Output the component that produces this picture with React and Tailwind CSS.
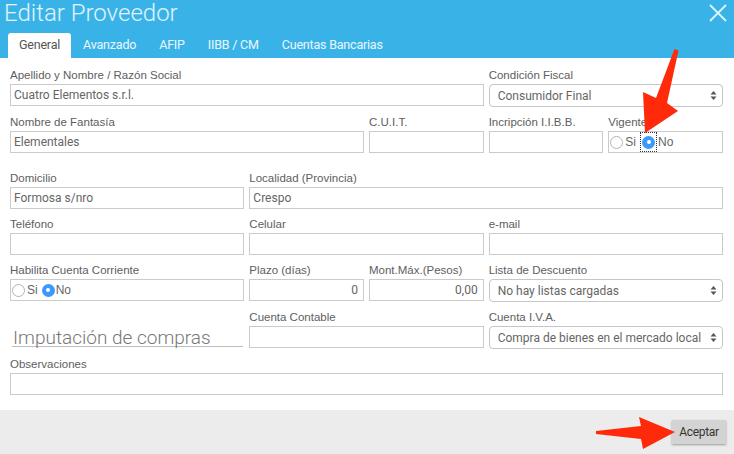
import React from 'react';

const SPAN = { 1: 'col-span-1', 2: 'col-span-2', 3: 'col-span-3', 4: 'col-span-4', 6: 'col-span-6' };

const labelCls =
  "block h-[16px] text-[11.5px] leading-[14px] text-[#5e5e5e] font-['Liberation_Sans',Arial,sans-serif] whitespace-nowrap";
const boxCls =
  "h-[22px] border border-[#cbcbcb] bg-white flex items-center px-[3px] text-[12px] text-[#666] font-['Roboto',sans-serif] whitespace-nowrap overflow-hidden";

function Field({ label, span = 1, children }) {
  return (
    <div className={SPAN[span]}>
      <div className={labelCls}>{label}</div>
      {children}
    </div>
  );
}

function Input({ value = '', right }) {
  return <div className={`${boxCls} ${right ? 'justify-end pr-[5px]' : ''}`}>{value}</div>;
}

function Select({ value }) {
  return (
    <div className="h-[23px] border border-[#c6c6c6] rounded-[4px] bg-white flex items-center pl-[8px] pr-[5px] text-[12px] text-[#666] font-['Roboto',sans-serif] whitespace-nowrap">
      <span className="flex-1 overflow-hidden">{value}</span>
      <svg width="7" height="11" viewBox="0 0 7 11" className="shrink-0">
        <path d="M3.5 1 L6.5 4.5 L0.5 4.5 Z" fill="#555" />
        <path d="M3.5 10 L6.5 6.5 L0.5 6.5 Z" fill="#555" />
      </svg>
    </div>
  );
}

function Radio({ checked, focus }) {
  const dot = checked ? (
    <span className="w-[13px] h-[13px] rounded-full bg-[#3b99fc] flex items-center justify-center">
      <span className="w-[4px] h-[4px] rounded-full bg-white" />
    </span>
  ) : (
    <span className="w-[13px] h-[13px] rounded-full border border-[#b4b4b4] bg-white" />
  );
  if (focus) {
    return <span className="flex items-center justify-center w-[17px] h-[20px] border border-dotted border-[#333]">{dot}</span>;
  }
  return dot;
}

function RadioBox({ value }) {
  return (
    <div className="h-[22px] border border-[#cbcbcb] bg-white flex items-center pl-[1px] text-[12px] text-[#666] font-['Liberation_Sans',Arial,sans-serif]">
      <Radio />
      <span className="ml-[2px] mr-[4px]">Si</span>
      <Radio checked focus={value} />
      <span className="ml-[1px]">No</span>
    </div>
  );
}

const tabs = ['General', 'Avanzado', 'AFIP', 'IIBB / CM', 'Cuentas Bancarias'];

export default function App() {
  return (
    <div className="relative w-[734px] h-[454px] overflow-hidden bg-white flex flex-col font-['Roboto',sans-serif]">
      {/* Header */}
      <div className="bg-[#39b3e7] h-[58px] shrink-0 flex flex-col">
        <div className="h-[33px] flex items-start justify-between pl-[4px] pr-[6px]">
          <span className="text-[24px] leading-[26px] font-light text-white/85">Editar Proveedor</span>
          <svg width="20" height="20" viewBox="0 0 20 20" className="mt-[3px]">
            <path d="M2 2 L18 18 M18 2 L2 18" stroke="#dff3fb" strokeWidth="1.8" />
          </svg>
        </div>
        <div className="h-[25px] flex items-stretch pl-[8px] gap-[1px]">
          {tabs.map((t, i) => (
            <div
              key={t}
              className={`px-[11px] flex items-center text-[12.5px] tracking-[-0.2px] ${
                i === 0 ? 'bg-white text-[#555] rounded-t-[3px]' : 'text-white/90'
              }`}
            >
              {t}
            </div>
          ))}
        </div>
      </div>

      {/* Form */}
      <div className="flex-1 pl-[10px] pr-[11px] pt-[10px] flex flex-col gap-y-[8px]">
        <div className="grid grid-cols-6 gap-x-[5px]">
          <Field label="Apellido y Nombre / Razón Social" span={4}>
            <Input value="Cuatro Elementos s.r.l." />
          </Field>
          <Field label="Condición Fiscal" span={2}>
            <Select value="Consumidor Final" />
          </Field>
        </div>

        <div className="grid grid-cols-6 gap-x-[5px]">
          <Field label="Nombre de Fantasía" span={3}>
            <Input value="Elementales" />
          </Field>
          <Field label="C.U.I.T.">
            <Input />
          </Field>
          <Field label="Incripción I.I.B.B.">
            <Input />
          </Field>
          <Field label="Vigente">
            <RadioBox value="no" />
          </Field>
        </div>

        <div className="grid grid-cols-6 gap-x-[5px] mt-[10px]">
          <Field label="Domicilio" span={2}>
            <Input value="Formosa s/nro" />
          </Field>
          <Field label="Localidad (Provincia)" span={4}>
            <Input value="Crespo" />
          </Field>
        </div>

        <div className="grid grid-cols-6 gap-x-[5px]">
          <Field label="Teléfono" span={2}>
            <Input />
          </Field>
          <Field label="Celular" span={2}>
            <Input />
          </Field>
          <Field label="e-mail" span={2}>
            <Input />
          </Field>
        </div>

        <div className="grid grid-cols-6 gap-x-[5px]">
          <Field label="Habilita Cuenta Corriente" span={2}>
            <RadioBox />
          </Field>
          <Field label="Plazo (días)">
            <Input value="0" right />
          </Field>
          <Field label="Mont.Máx.(Pesos)">
            <Input value="0,00" right />
          </Field>
          <Field label="Lista de Descuento" span={2}>
            <Select value="No hay listas cargadas" />
          </Field>
        </div>

        <div className="grid grid-cols-6 gap-x-[5px]">
          <div className="col-span-2 pt-[16px]">
            <div className="h-[21px] border-b border-[#bdbdbd] ml-[2px] mr-[1px] pl-[1px] text-[19px] leading-[24px] font-light text-[#777] whitespace-nowrap">
              Imputación de compras
            </div>
          </div>
          <Field label="Cuenta Contable" span={2}>
            <Input />
          </Field>
          <Field label="Cuenta I.V.A." span={2}>
            <Select value="Compra de bienes en el mercado local" />
          </Field>
        </div>

        <div className="grid grid-cols-6 gap-x-[5px]">
          <Field label="Observaciones" span={6}>
            <Input />
          </Field>
        </div>
      </div>

      {/* Footer */}
      <div className="h-[44px] shrink-0 bg-[#ececec] flex items-start justify-end pr-[8px] pt-[10px]">
        <button className="h-[24px] w-[54px] bg-[#d3d3d3] text-[12px] tracking-[-0.3px] text-[#333] shadow-[0_1px_2px_rgba(0,0,0,0.35)]">
          Aceptar
        </button>
      </div>

      {/* Annotation arrows */}
      <svg className="absolute inset-0 pointer-events-none" width="734" height="454" viewBox="0 0 734 454">
        <polygon
          points="674.5,49 678.5,50.5 667,103 678,111 645,133 643,92 656,98"
          fill="#ff2a0a"
        />
        <polygon
          points="596,431 641,426 639,417 675,432 643,449 641,439 596,434"
          fill="#ff2a0a"
        />
      </svg>
    </div>
  );
}
